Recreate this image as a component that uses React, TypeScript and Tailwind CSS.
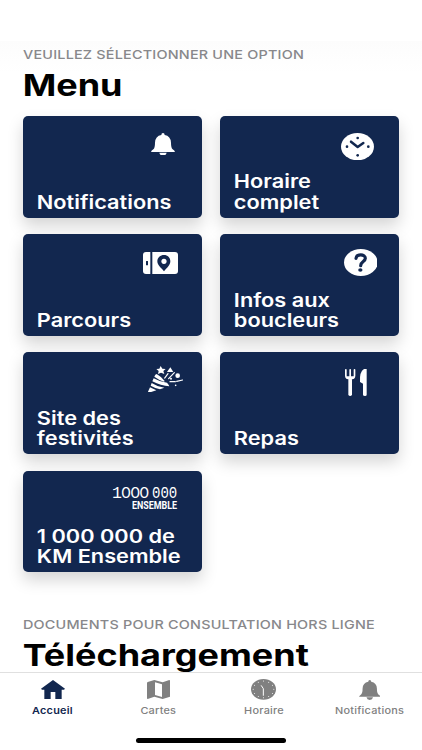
import React from "react";

type Tile = {
  label: string[];
  icon: React.ReactNode;
};

const NAVY = "#12274f";

function BellIcon({ className }: { className: string }) {
  return (
    <svg viewBox="0 0 72 68" preserveAspectRatio="none" className={className} fill="currentColor">
      <path d="M31 6 Q31 0 36 0 Q41 0 41 6 Q59 9 60 29 Q60 45 65 49 Q71 53 72 57 L0 57 Q1 53 7 49 Q12 45 12 29 Q13 9 31 6Z" />
      <path d="M25 59 H47 Q45 68 36 68 Q27 68 25 59Z" />
    </svg>
  );
}

function ClockIcon() {
  return (
    <svg viewBox="0 0 99 82" className="w-[33px] h-[27.3px] mt-[16.5px] mr-[25px]" fill="none">
      <ellipse cx="49.5" cy="41" rx="49.5" ry="41" fill="white" />
      <path d="M30 26 L50 42 L67 30" stroke={NAVY} strokeWidth="7.5" strokeLinecap="round" strokeLinejoin="round" />
      <g fill={NAVY}>
        <circle cx="50" cy="15" r="4" />
        <circle cx="50" cy="67" r="4" />
        <circle cx="18" cy="41" r="4" />
        <circle cx="82" cy="41" r="4" />
      </g>
    </svg>
  );
}

function RouteIcon() {
  return (
    <svg viewBox="0 0 105 66" className="w-[35px] h-[22px] mt-[17.8px] mr-[24.3px]" fill="white">
      <path d="M9 0 H22 V66 H9 Q0 66 0 57 V9 Q0 0 9 0Z" />
      <path d="M28 0 H96 Q105 0 105 9 V57 Q105 66 96 66 H28Z" />
      <rect x="9" y="27" width="6" height="13" rx="1" fill={NAVY} />
      <path
        fillRule="evenodd"
        d="M63 9 C52 9 43 17 43 28 C43 40 55 48 63 58 C71 48 82 40 82 28 C82 17 74 9 63 9Z M63 20 A8 8 0 1 1 62.9 20Z"
        fill={NAVY}
      />
    </svg>
  );
}

function HelpIcon() {
  return (
    <svg viewBox="0 0 101 81" className="w-[33.7px] h-[27px] mt-[14.8px] mr-[21.8px]" fill="none">
      <ellipse cx="50.5" cy="40.5" rx="50.5" ry="40.5" fill="white" />
      <path d="M36 28 C37 14 64 14 64 28 C64 38 50 37 50 50" stroke={NAVY} strokeWidth="9.5" strokeLinecap="round" />
      <ellipse cx="49" cy="63" rx="6.5" ry="5" fill={NAVY} />
    </svg>
  );
}

function PartyIcon() {
  return (
    <svg viewBox="0 0 105 80" className="w-[35px] h-[26.7px] mt-[13.3px] mr-[18.7px]" fill="white">
      <path d="M38 0 L43 8 L53 9 L46 15 L49 24 L39 20 L30 24 L32 15 L25 9 L34 8Z" />
      <path d="M22 26 L26 24 Q40 32 50 45 L48 47 Q34 43 19 32Z" />
      <path d="M17 37 Q36 48 57 50 Q63 56 64 61 Q39 59 13 46Z" />
      <path d="M11 51 Q27 62 49 65 L36 70 Q22 67 8 59Z" />
      <path d="M6 64 L25 73 L3 80 Q0 80 0 77Z" />
      <path d="M67 4 L76 18 L57 18Z" />
      <circle cx="89" cy="29" r="7" />
      <circle cx="69" cy="38" r="3" />
      <circle cx="83" cy="58" r="2.5" />
      <path
        d="M60 23 L50 36 M79 20 L62 38 M66 47 H82 M86 46 L104 42"
        stroke="white"
        strokeWidth="3.6"
        strokeLinecap="round"
        fill="none"
      />
    </svg>
  );
}

function MealIcon() {
  return (
    <svg viewBox="0 0 65 81" className="w-[21.7px] h-[27px] mt-[16.5px] mr-[32.3px]" fill="white">
      <path
        d="M2.5 2.5 V20 Q2.5 29 15.5 29 Q28.5 29 28.5 20 V2.5 M15.5 2.5 V30"
        stroke="white"
        strokeWidth="5"
        strokeLinecap="round"
        fill="none"
      />
      <rect x="10" y="27" width="11" height="54" rx="5" />
      <path d="M4 22 H27 Q27 31 15.5 31 Q4 31 4 22Z" />
      <path d="M65 0 V77 Q65 81 60 81 Q54 81 54 77 V44 L45 39 Q43 8 57 0Z" />
    </svg>
  );
}

function MillionLogo() {
  return (
    <div className="mt-[15px] mr-[25px] flex flex-col items-end text-white">
      <div className="flex h-[15px] w-[65px] items-start text-[15px] leading-[15px] whitespace-nowrap">
        <span className="w-[9px] font-['Liberation_Mono'] text-[16.5px]">1</span>
        <span className="w-[31px] font-['Inter'] leading-[13px]">
          <span className="inline-block origin-left scale-x-[1.06] tracking-[-0.8px]">000</span>
        </span>
        <span className="w-[25px] font-['Liberation_Mono'] text-[16.5px]">
          <span className="inline-block origin-left scale-x-[0.85]">000</span>
        </span>
      </div>
      <div className="w-[45px] font-['Roboto'] text-[11px] leading-[9px] font-bold">
        <span className="inline-block origin-left scale-x-[0.81]">ENSEMBLE</span>
      </div>
    </div>
  );
}

const TILES: Tile[] = [
  { label: ["Notifications"], icon: <BellIcon className="w-[24px] h-[22.7px] mt-[16.5px] mr-[26.7px]" /> },
  { label: ["Horaire", "complet"], icon: <ClockIcon /> },
  { label: ["Parcours"], icon: <RouteIcon /> },
  { label: ["Infos aux", "boucleurs"], icon: <HelpIcon /> },
  { label: ["Site des", "festivités"], icon: <PartyIcon /> },
  { label: ["Repas"], icon: <MealIcon /> },
  { label: ["1 000 000 de", "KM Ensemble"], icon: <MillionLogo /> },
];

function MenuTile({ tile }: { tile: Tile }) {
  return (
    <button className="flex h-[101.5px] flex-col justify-between rounded-[5px] bg-[#12274f] pb-[5.5px] text-left text-white shadow-[0_8px_16px_rgba(0,0,0,0.17)]">
      <div className="flex w-full justify-end">{tile.icon}</div>
      <div className="origin-left scale-x-[1.175] pl-[11.8px] text-[18.5px] font-semibold leading-[20.3px] whitespace-nowrap">
        {tile.label.map((line) => (
          <div key={line}>{line}</div>
        ))}
      </div>
    </button>
  );
}

function SectionHeading({ caption, title }: { caption: string; title: string }) {
  return (
    <div className="origin-left scale-x-[1.2] whitespace-nowrap">
      <p className="text-[12px] font-medium leading-4 tracking-[0.17px] text-[#88888b]">{caption}</p>
      <h1 className="mt-[2px] -ml-[0.3px] text-[30px] font-bold leading-10 text-black">{title}</h1>
    </div>
  );
}

const TABS = [
  {
    label: "Accueil",
    icon: (
      <svg viewBox="0 0 72 57" className="h-[19px] w-[24px]" fill="currentColor">
        <path d="M36 0 L72 26 L69 29 H62 V57 H43 V36 H29 V57 H10 V29 H3 L0 26Z" />
      </svg>
    ),
  },
  {
    label: "Cartes",
    icon: (
      <svg viewBox="0 0 69 57" className="h-[19px] w-[23px]" fill="currentColor">
        <path
          fillRule="evenodd"
          d="M2 6 L22 0 L47 7 L67 0 Q69 0 69 3 V50 L47 57 L22 50 L2 57 Q0 57 0 54 V8Z M24 7 V45 L45 51 V13Z"
        />
      </svg>
    ),
  },
  {
    label: "Horaire",
    icon: (
      <svg viewBox="0 0 75 62" className="h-[20.7px] w-[25px]" fill="currentColor">
        <ellipse cx="37.5" cy="31" rx="37.5" ry="31" />
        <path d="M31 20 L37 29 V49" stroke="white" strokeWidth="3" fill="none" strokeLinecap="round" />
        <g fill="white">
          {Array.from({ length: 12 }, (_, i) => (
            <circle
              key={i}
              cx={37.5 + 31 * Math.sin((i * Math.PI) / 6)}
              cy={31 - 25 * Math.cos((i * Math.PI) / 6)}
              r="1.5"
            />
          ))}
        </g>
      </svg>
    ),
  },
  { label: "Notifications", icon: <BellIcon className="h-[20px] w-[21.5px]" /> },
];

export default function App() {
  return (
    <div className="flex h-[750px] w-[422px] flex-col overflow-hidden bg-white font-['Inter',sans-serif]">
      <div className="h-[41px] shrink-0" />
      <main className="h-[631px] shrink-0 overflow-hidden bg-linear-to-b from-[#fcfcfc] to-white to-5% px-[23px] pt-[6px]">
        <SectionHeading caption="VEUILLEZ SÉLECTIONNER UNE OPTION" title="Menu" />
        <div className="mt-[11px] grid grid-cols-2 gap-x-[18px] gap-y-[16.7px]">
          {TILES.map((tile) => (
            <MenuTile key={tile.label[0]} tile={tile} />
          ))}
        </div>
        <div className="mt-[45px]">
          <SectionHeading caption="DOCUMENTS POUR CONSULTATION HORS LIGNE" title="Téléchargement" />
        </div>
      </main>

      <nav className="flex h-[78px] shrink-0 flex-col items-center border-t border-[#e0e0e0] bg-white">
        <div className="grid w-full grid-cols-4">
          {TABS.map((tab, i) => (
            <button
              key={tab.label}
              className={`flex flex-col items-center ${i === 0 ? "text-[#12274f]" : "text-[#808080]"}`}
            >
              <span className="mt-[6px] flex h-[21px] items-center">{tab.icon}</span>
              <span
                className={`mt-[5px] scale-x-[1.17] text-[9.3px] leading-3 tracking-[0.2px] ${i === 0 ? "font-semibold" : "font-medium"}`}
              >
                {tab.label}
              </span>
            </button>
          ))}
        </div>
        <div className="mt-[21px] h-[4.5px] w-[150px] rounded-full bg-black" />
      </nav>
    </div>
  );
}
